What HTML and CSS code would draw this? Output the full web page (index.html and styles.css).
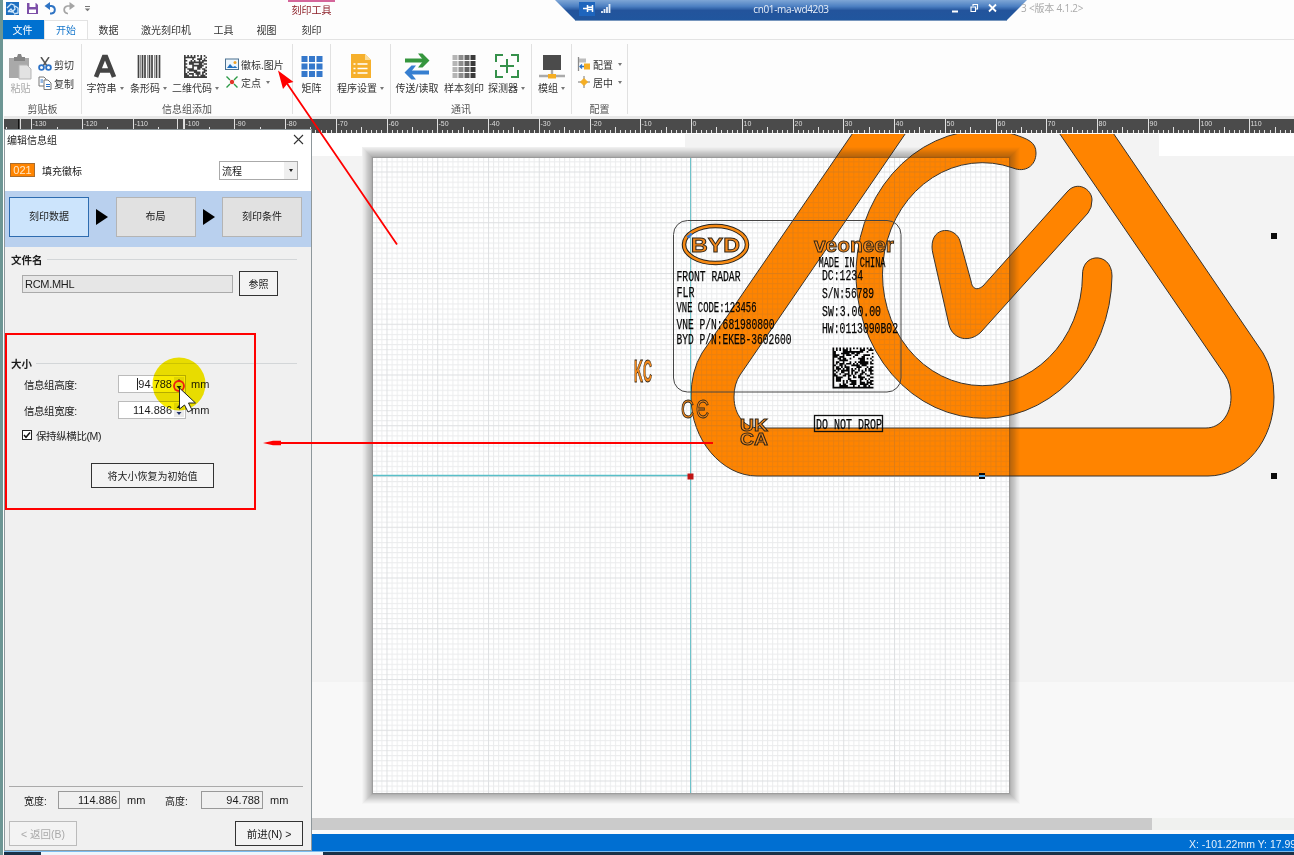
FILE: index.html
```html
<!DOCTYPE html>
<html lang="zh-CN">
<head>
<meta charset="utf-8">
<title>刻印工具</title>
<link rel="stylesheet" href="styles.css">
</head>
<body>
<div class="app">
  <header class="titlebar">
    <div class="quick">
      <svg width="95" height="18" viewBox="0 0 95 18">
        <rect x="6" y="2" width="13" height="13" fill="#1e6fc0"/>
        <path d="M7 8l4-4 3 1 1 4-3 3-4-1M8 12l3-3 3 4M15 6l3 2v5l-4 1" fill="none" stroke="#cfe6fa" stroke-width="1.3"/>
        <path d="M27 3h9l2 2v9H27z" fill="#7d4fa8"/><path d="M29.500 3h6v4h-6zM29 9.500h7V13h-7z" fill="#fff"/>
        <path d="M46 6h5.500a4 3.800 0 0 1 0 7.500H50" fill="none" stroke="#2f74c4" stroke-width="1.900"/><path d="M50 2v8l-5.500-4z" fill="#2f74c4"/>
        <path d="M73 6h-5.500a4 3.800 0 0 0 0 7.500H68" fill="none" stroke="#a5a5a5" stroke-width="1.700"/><path d="M69.500 2v8l5.500-4z" fill="#a5a5a5"/>
        <path d="M85 6.500h5" stroke="#777"/><path d="M84.800 8.500h5.400l-2.700 2.800z" fill="#777"/>
      </svg>
    </div>
    <div class="context-tab">刻印工具</div>
    <div class="remote">
      <svg class="remote-shape" width="472" height="22" viewBox="0 0 472 22">
        <defs><linearGradient id="rb" x2="0" y2="1"><stop offset="0" stop-color="#7ea6d6"/><stop offset=".3" stop-color="#4d80c2"/><stop offset=".5" stop-color="#23549c"/><stop offset="1" stop-color="#20569e"/></linearGradient></defs>
        <path d="M0 0h472l-21 21H21z" fill="url(#rb)"/><path d="M20 20.500h432" stroke="#7796bd"/>
        <rect x="24" y="2" width="16" height="14" fill="#1e65bd"/>
        <path d="M28 8.500h4M32.500 5v7M37.500 5v7M33 7.200h4.500M33 9.500h4.500" stroke="#fff" stroke-width="1.500"/>
        <path d="M47 13v-2M49.500 13v-4M52 13V7M54.500 13V4" stroke="#e7effa" stroke-width="1.800"/>
        <path d="M397 11.500h6M434 4.500l7 7m0-7l-7 7" stroke="#fff" stroke-width="1.800"/>
        <path d="M416 7h4.500v4.500H416zM418 6V4.500h4.500V9H421" fill="none" stroke="#fff" stroke-width="1.100"/>
      </svg>
      <span class="remote-name">cn01-ma-wd4203</span>
    </div>
    <span class="version">3 &lt;版本 4.1.2&gt;</span>
  </header>

  <nav class="tabs">
    <span class="tab tab-file">文件</span><span class="tab tab-active">开始</span><span class="tab">数据</span><span class="tab tab-wide">激光刻印机</span><span class="tab">工具</span><span class="tab">视图</span><span class="tab tab-last">刻印</span>
  </nav>

  <div class="ribbon">
    <section class="group g-clip">
      <div class="tools">
        <div class="big disabled">
          <svg width="26" height="28" viewBox="0 0 26 28"><path d="M1 5h20v20H1z" fill="#a9a9a9"/><path d="M6 8V4h3l1-3h3l1 3h3v4z" fill="#858585"/><path d="M11 12h8l4 4v10H11z" fill="#e2e2e2" stroke="#b5b5b5"/></svg>
          <span class="cap">粘贴</span>
        </div>
        <div class="small-col">
          <div class="small"><svg width="14" height="14" viewBox="0 0 14 14"><path d="M3 0l6 9M11 0L5 9" stroke="#555" stroke-width="1.500"/><circle cx="3.500" cy="10.500" r="2.400" fill="none" stroke="#2c72c7" stroke-width="1.800"/><circle cx="10.500" cy="10.500" r="2.400" fill="none" stroke="#2c72c7" stroke-width="1.800"/></svg>剪切</div>
          <div class="small"><svg width="14" height="14" viewBox="0 0 14 14"><path d="M1 1h5l2 2v7H1z" fill="#fff" stroke="#777"/><path d="M6 4h4l3 3v6.500H6z" fill="#fff" stroke="#777"/><path d="M2.500 4H5M2.500 6H5M8 8.500h4M8 10.500h4" stroke="#2c72c7"/></svg>复制</div>
        </div>
      </div>
      <div class="group-name">剪贴板</div>
    </section>
    <section class="group g-add">
      <div class="tools">
        <div class="big b-char"><svg width="24" height="28" viewBox="0 0 24 28"><path d="M3 24L11 4h2l8 20M6.500 17.500h11" fill="none" stroke="#444" stroke-width="4.600"/></svg><span class="cap">字符串<i class="drop"></i></span></div>
        <div class="big b-bar"><svg width="24" height="28" viewBox="0 0 24 28"><path d="M1.500 2v23M5.500 2v23M8 2v23M12.500 2v23M15 2v23M19.500 2v23M22.500 2v23" stroke="#444" stroke-width="1.700"/><path d="M3.500 2v23M10.500 2v23M17.500 2v23" stroke="#777" stroke-width=".8"/></svg><span class="cap">条形码<i class="drop"></i></span></div>
        <div class="big b-qr"><svg width="24" height="28" viewBox="0 0 24 28"><path id="ribbonCode" fill="#3c3c3c"/></svg><span class="cap">二维代码<i class="drop"></i></span></div>
        <div class="small-col">
          <div class="small"><svg width="14" height="14" viewBox="0 0 14 14"><rect x=".5" y="2" width="13" height="10.500" fill="#eef6fc" stroke="#4b7090"/><path d="M2 11l3-4 3 3 2-1 2.500 2z" fill="#1e70c2"/><circle cx="10" cy="5.500" r="1.500" fill="#f0a224"/></svg>徽标.图片</div>
          <div class="small"><svg width="14" height="14" viewBox="0 0 14 14"><path d="M1.500 1.500l3.500 3.500M12.500 1.500L9 5M1.500 12.500L5 9M12.500 12.500L9 9" stroke="#2c9a47" stroke-width="1.400"/><circle cx="7" cy="7" r="2.200" fill="#e23428"/></svg>定点<i class="drop"></i></div>
        </div>
      </div>
      <div class="group-name">信息组添加</div>
    </section>
    <section class="group g-matrix">
      <div class="tools"><div class="big"><svg width="24" height="28" viewBox="0 0 24 28"><path d="M1.500 3h6v6h-6zm7.500 0h6v6h-6zm7.500 0h6v6h-6zM1.500 10.500h6v6h-6zm7.500 0h6v6h-6zm7.500 0h6v6h-6zM1.500 18h6v6h-6zm7.500 0h6v6h-6zm7.500 0h6v6h-6z" fill="#3578cb"/></svg><span class="cap">矩阵</span></div></div>
    </section>
    <section class="group g-prog">
      <div class="tools"><div class="big"><svg width="22" height="28" viewBox="0 0 22 28"><path d="M1 1h14l6 6v18H1z" fill="#f6b02c"/><path d="M15 1l6 6h-6z" fill="#fbdc98"/><path d="M7.500 11h10M7.500 15.500h10M7.500 20h10M3.500 11h2M3.500 15.500h2M3.500 20h2" stroke="#fff" stroke-width="1.700"/></svg><span class="cap">程序设置<i class="drop"></i></span></div></div>
    </section>
    <section class="group g-comm">
      <div class="tools">
        <div class="big b-send"><svg width="26" height="28" viewBox="0 0 26 28"><path d="M1 7.500h19" stroke="#36963e" stroke-width="4"/><path d="M14 .5h4.500l7 7-7 7H14l5.500-7z" fill="#36963e"/><path d="M6 19.500h19" stroke="#377fd0" stroke-width="4"/><path d="M12 12.500H7.500l-7 7 7 7H12l-5.500-7z" fill="#377fd0"/></svg><span class="cap">传送/读取</span></div>
        <div class="big b-sample"><svg width="24" height="28" viewBox="0 0 24 28"><path d="M3 2v23" stroke="#b5b5b5" stroke-width="5" stroke-dasharray="5 1"/><path d="M9 2v23" stroke="#8d8d8d" stroke-width="5" stroke-dasharray="5 1"/><path d="M15 2v23" stroke="#646464" stroke-width="5" stroke-dasharray="5 1"/><path d="M21 2v23" stroke="#3a3a3a" stroke-width="5" stroke-dasharray="5 1"/></svg><span class="cap">样本刻印</span></div>
        <div class="big b-probe"><svg width="24" height="28" viewBox="0 0 24 28"><path d="M1 9V2h7M16 2h7v7M23 17v7h-7M8 24H1v-7M12 6v14M5 13h14" fill="none" stroke="#36914b" stroke-width="2"/></svg><span class="cap">探测器<i class="drop"></i></span></div>
      </div>
      <div class="group-name">通讯</div>
    </section>
    <section class="group g-module">
      <div class="tools"><div class="big"><svg width="28" height="28" viewBox="0 0 28 28"><rect x="5" y="2" width="18" height="15" fill="#4b4b4b"/><path d="M14 17v5M1 23h26" stroke="#aaa" stroke-width="2.400"/><rect x="10" y="21" width="8" height="4.500" fill="#f5ae23"/></svg><span class="cap">模组<i class="drop"></i></span></div></div>
    </section>
    <section class="group g-config">
      <div class="tools"><div class="small-col">
        <div class="small"><svg width="14" height="14" viewBox="0 0 14 14"><path d="M1.500 0v14" stroke="#8b8b8b" stroke-width="1.300"/><rect x="2" y="1.500" width="7" height="4" fill="#bcbcbc"/><path d="M3 9.500h4M5 7.500l-2 2 2 2" fill="none" stroke="#2c72c7" stroke-width="1.300"/><rect x="7" y="6.500" width="6" height="6" fill="#f5ae23"/></svg>配置<i class="drop"></i></div>
        <div class="small"><svg width="14" height="14" viewBox="0 0 14 14"><path d="M7 1v12M1 7h12" stroke="#777"/><path d="M7 3.500l3.500 3.500L7 10.500 3.500 7z" fill="#f5ae23" stroke="#f5ae23"/></svg>居中<i class="drop"></i></div>
      </div></div>
      <div class="group-name">配置</div>
    </section>
  </div>

  <svg class="ruler" width="1290" height="15" viewBox="4 119 1290 15">
    <rect x="4" y="119" width="1290" height="14" fill="#4b4b4b"/>
    <path id="ticks" stroke="#e2e2e2"/>
    <g id="rulerLabels" class="ruler-labels"></g>
    <path d="M18.500 119v14" stroke="#111"/><path d="M20.500 119v14M177.500 119v14M183.500 119v14" stroke="#ddd"/>
  </svg>

  <main class="work">
    <svg class="canvas" width="982" height="684" viewBox="312 134 982 684">
      <defs>
        <pattern id="mm" x="691" y="476" width="5.075" height="5.075" patternUnits="userSpaceOnUse"><path d="M0 .5h5.075M.5 0v5.075" stroke="#5c6270" stroke-opacity=".12"/></pattern>
        <pattern id="cm" x="691" y="476" width="50.75" height="50.75" patternUnits="userSpaceOnUse"><path d="M0 .5h50.750M.5 0v50.750" stroke="#5c6270" stroke-opacity=".09"/></pattern>
      </defs>
      <rect x="312" y="134" width="982" height="684" fill="#f3f3f3"/>
      <path d="M312 134h373v13H362v9h-50zM1159 134h135v22h-135z" fill="#fff"/>
      <rect x="312" y="682" width="982" height="136" fill="#f8f8f8"/>
      <rect x="373" y="158" width="636" height="635" fill="#fff"/>
      <g fill="#ff8400" stroke="#38332d" stroke-width="1" fill-rule="evenodd">
        <path d="M859 124L702 353Q691 371 691 397C691 440 722 476 757 476H1208C1245 476 1274 440 1274 397Q1274 371 1263 353L1107 124H1053L1225 375Q1231 384 1231 397C1231 415 1220 428 1206 428H759C745 428 734 415 734 397Q734 384 740 375L912 124Z"/>
        <path d="M1013 134C1028 139 1036 142 1036 153C1036 166 1025 173 1013 168A100 111.500 0 1 0 1082.500 275C1082 252 1112 252 1112 276A128 144 0 1 1 1013 134Z"/>
        <path d="M932 247C932 225 956 227 960 241L971 281C972 289 977 291 983 286L1067 192C1077 180 1092 189 1092 200Q1092 208 1088 213L981 332C970 343 953 340 949 325L933 254Q932 250 932 247Z"/>
      </g>
      <rect x="373" y="158" width="636" height="635" fill="url(#mm)"/>
      <rect x="373" y="158" width="636" height="635" fill="url(#cm)"/>
      <g fill="none" stroke="#202020" stroke-width="1">
        <rect x="372.500" y="157.500" width="637" height="636" stroke-opacity=".42"/>
        <rect x="371.500" y="156.500" width="639" height="638" stroke-opacity=".33"/>
        <rect x="370.500" y="155.500" width="641" height="640" stroke-opacity=".28"/>
        <rect x="369.500" y="154.500" width="643" height="642" stroke-opacity=".25"/>
        <rect x="368.500" y="153.500" width="645" height="644" stroke-opacity=".22"/>
        <rect x="367.500" y="152.500" width="647" height="646" stroke-opacity=".19"/>
        <rect x="366.500" y="151.500" width="649" height="648" stroke-opacity=".15"/>
        <rect x="365.500" y="150.500" width="651" height="650" stroke-opacity=".11"/>
        <rect x="364.500" y="149.500" width="653" height="652" stroke-opacity=".08"/>
        <rect x="363.500" y="148.500" width="655" height="654" stroke-opacity=".05"/>
        <rect x="362.500" y="147.500" width="657" height="656" stroke-opacity=".02"/>
      </g>
      <path d="M690.500 158v635" stroke="#6ec3ca"/>
      <path d="M373 475.500h318" stroke="#58bfc8" stroke-width="1.400"/>
      <rect x="673.500" y="220.500" width="227.500" height="171.500" rx="14" fill="none" stroke="#444"/>
      <ellipse cx="715.500" cy="244.500" rx="31.500" ry="18.500" fill="none" stroke="#29241e" stroke-width="4.500"/>
      <ellipse cx="715.500" cy="244.500" rx="31.500" ry="18.500" fill="none" stroke="#f78a13" stroke-width="2.500"/>
      <path d="M687 237l5-3M689 238l2-5" stroke="#3479d5" stroke-width="1.500"/>
      <g class="mark-logo">
        <text x="691" y="251.500" font-size="20" font-weight="bold" textLength="49" lengthAdjust="spacingAndGlyphs">BYD</text>
        <text x="814" y="252" font-size="20" font-weight="bold" stroke-width=".9" textLength="80" lengthAdjust="spacingAndGlyphs">veoneer</text>
        <text x="634" y="382" font-size="31" font-weight="bold" textLength="18" lengthAdjust="spacingAndGlyphs">KC</text>
        <text x="681" y="418" font-size="25" textLength="13" lengthAdjust="spacingAndGlyphs">C</text>
        <text x="696" y="418" font-size="25" textLength="13" lengthAdjust="spacingAndGlyphs">Є</text>
        <text x="740" y="430.500" font-size="16" font-weight="bold" textLength="28" lengthAdjust="spacingAndGlyphs">UK</text>
        <text x="740" y="445" font-size="16" font-weight="bold" textLength="28" lengthAdjust="spacingAndGlyphs">CA</text>
      </g>
      <g class="mark-text">
        <text x="676.500" y="280.500" textLength="64" lengthAdjust="spacingAndGlyphs">FRONT RADAR</text>
        <text x="676.500" y="296.500" textLength="18" lengthAdjust="spacingAndGlyphs">FLR</text>
        <text x="676.500" y="311.500" textLength="80" lengthAdjust="spacingAndGlyphs">VNE CODE:123456</text>
        <text x="676.500" y="328.500" textLength="98" lengthAdjust="spacingAndGlyphs">VNE P/N:681980800</text>
        <text x="676.500" y="344" textLength="115" lengthAdjust="spacingAndGlyphs">BYD P/N:EKEB-3602600</text>
        <text x="818.500" y="266.500" textLength="67" lengthAdjust="spacingAndGlyphs">MADE IN CHINA</text>
        <text x="822" y="279.500" textLength="41" lengthAdjust="spacingAndGlyphs">DC:1234</text>
        <text x="822" y="298" textLength="52" lengthAdjust="spacingAndGlyphs">S/N:56789</text>
        <text x="822" y="315.500" textLength="59" lengthAdjust="spacingAndGlyphs">SW:3.00.00</text>
        <text x="822" y="332.500" textLength="76" lengthAdjust="spacingAndGlyphs">HW:0113090B02</text>
        <text x="816" y="428.500" textLength="66" lengthAdjust="spacingAndGlyphs">DO NOT DROP</text>
      </g>
      <path id="labelCode" fill="#050505"/>
      <rect x="814.500" y="415.500" width="68" height="16" fill="none" stroke="#111" stroke-width="1.300"/>
      <path d="M1271 233h6v6h-6zM1271 473h6v6h-6zM979 473h6v6h-6z" fill="#0a0a0a"/>
      <path d="M979 475h6v2h-6z" fill="#51a8e7"/>
      <path d="M687.500 473.500h6v6h-6z" fill="#c01414"/>
    </svg>
  </main>
  <div class="scroll"><div class="thumb"></div></div>
  <footer class="status">X: -101.22mm Y: 17.99mm</footer>
  <div class="taskbar"><div class="task-light"></div></div>

  <aside class="panel">
    <div class="panel-title"><span>编辑信息组</span><svg width="11" height="11" viewBox="0 0 11 11"><path d="M1 1l9 9M10 1l-9 9" stroke="#333" stroke-width="1.100"/></svg></div>
    <div class="panel-id"><span class="badge">021</span><span>填充徽标</span><span class="select"><span>流程</span><i class="select-arrow"></i></span></div>
    <div class="steps"><span class="step step-on">刻印数据</span><i class="next"></i><span class="step">布局</span><i class="next"></i><span class="step">刻印条件</span></div>
    <div class="heading">文件名</div>
    <div class="file-row"><span class="file-name">RCM.MHL</span><button class="btn btn-browse">参照</button></div>
    <div class="heading heading-size">大小</div>
    <div class="field"><label>信息组高度:</label><span class="num"><span class="caret">94.788</span><svg width="10" height="14" viewBox="0 0 10 14"><rect width="10" height="14" fill="#e9e9e9"/><path d="M5 2l2.500 3h-5zM5 12l2.500-3h-5z" fill="#20306a"/></svg></span><span>mm</span></div>
    <div class="field"><label>信息组宽度:</label><span class="num">114.886<svg width="10" height="14" viewBox="0 0 10 14"><rect width="10" height="14" fill="#e9e9e9"/><path d="M5 2l2.500 3h-5zM5 12l2.500-3h-5z" fill="#20306a"/></svg></span><span>mm</span></div>
    <div class="check"><svg width="10" height="10" viewBox="0 0 10 10"><rect x=".5" y=".5" width="9" height="9" fill="#fff" stroke="#222"/><path d="M2 5l2 2.300L8 2.500" fill="none" stroke="#111" stroke-width="1.500"/></svg>保持纵横比(M)</div>
    <button class="btn btn-reset">将大小恢复为初始值</button>
    <div class="panel-foot">
      <div class="totals"><span class="t-label">宽度:</span><span class="total">114.886</span><span class="t-unit">mm</span><span class="t-label">高度:</span><span class="total">94.788</span><span class="t-unit">mm</span></div>
      <div class="nav-row"><button class="btn btn-nav btn-off">&lt; 返回(B)</button><button class="btn btn-nav">前进(N) &gt;</button></div>
    </div>
  </aside>

  <svg class="notes" width="1294" height="855" viewBox="0 0 1294 855">
    <circle class="halo" cx="179" cy="384" r="26.500" fill="#f7ea00"/>
    <circle cx="179" cy="386" r="5" fill="none" stroke="#f01c10" stroke-width="1.800"/>
    <path d="M179.500 388v21l5-4 3.500 7 4-2-3.500-7h7z" fill="#fff" stroke="#222"/>
    <rect x="6" y="334" width="249" height="175" fill="none" stroke="#f00" stroke-width="2"/>
    <path d="M713 443H278M397 244.500L286 82" stroke="#f00" stroke-width="1.800"/>
    <path d="M263 443l10-2.300h8v4.600h-8zM278 70.500l15.500 11.500-6 1.500-4.500 5.500z" fill="#f00"/>
  </svg>
</div>
<script src="app.js"></script>
</body>
</html>
```

FILE: styles.css
```css
* { box-sizing: border-box; }
body { margin: 0; overflow: hidden; background: #fdfdfd; font-family: "Liberation Sans", "Noto Sans CJK SC", sans-serif; font-size: 10px; color: #333; }
svg { display: block; flex: none; }
.app { position: relative; width: 1294px; height: 855px; overflow: hidden; display: flex; flex-direction: column; border-left: 3px solid #6d9694; padding-left: 1px; }

.titlebar { height: 20px; flex: none; display: flex; align-items: flex-start; margin-left: -4px; }
.quick { width: 288px; }
.context-tab { width: 47px; height: 20px; border-top: 2px solid #d4669a; text-align: center; line-height: 17px; color: #8c1f28; }
.remote { position: relative; margin-left: 220px; width: 472px; height: 22px; flex: none; display: flex; justify-content: center; }
.remote-shape { position: absolute; left: 0; top: 0; }
.remote-name { position: relative; color: #e9f0f9; font: 10px/18px "Open Sans", sans-serif; letter-spacing: -.35px; }
.version { margin-left: -6px; position: relative; color: #aaa; line-height: 17px; font-family: "Open Sans", "Noto Sans CJK SC", sans-serif; white-space: nowrap; letter-spacing: -.2px; }

.tabs { height: 20px; flex: none; display: flex; border-bottom: 1px solid #e3e3e3; margin-left: -3px; }
.tab { width: 43px; text-align: center; line-height: 21px; flex: none; padding-right: 2px; }
.tab-file { background: #0071d0; color: #fff; padding-right: 0; }
.tab-active { width: 44px; background: #fff; color: #1878cc; border: 1px solid #e3e3e3; border-bottom: 0; line-height: 19px; padding-right: 0; }
.tab-wide { width: 72px; }
.tab-last { width: 47px; }

.ribbon { height: 79px; flex: none; display: flex; padding-top: 4px; border-bottom: 3px solid #e8e8e8; background: #fdfdfd; }
.group { height: 70px; border-right: 1px solid #e1e1e1; display: flex; flex-direction: column; flex: none; }
.tools { height: 57px; flex: none; padding-top: 9px; display: flex; }
.group-name { text-align: center; line-height: 15px; padding-top: 1px; color: #555; }
.big { display: flex; flex-direction: column; align-items: center; width: 100%; }
.cap { display: flex; align-items: center; line-height: 15px; white-space: nowrap; }
.drop { border: 2.5px solid transparent; border-top: 3px solid #777; border-bottom: 0; margin-left: 3px; }
.small-col { display: flex; flex-direction: column; gap: 1px; padding-top: 2px; }
.small { display: flex; align-items: center; height: 18px; gap: 2px; white-space: nowrap; }
.disabled { color: #aaa; }
.g-clip { width: 78px; }
.g-clip .big { width: 33px; }
.g-clip .small-col { padding-left: 1px; }
.g-add { width: 211px; }
.b-char { width: 46px; }
.b-bar { width: 41px; }
.b-qr { width: 53px; }
.g-add .small-col { padding-left: 3px; gap: 0; }
.g-matrix { width: 38px; }
.g-prog { width: 60px; }
.g-comm { width: 141px; }
.b-send { width: 52px; }
.b-sample { width: 42px; }
.b-probe { width: 43px; }
.g-module { width: 40px; }
.g-config { width: 56px; }
.g-config .small-col { padding-left: 5px; gap: 0; }

.ruler { flex: none; }
.ruler-labels { fill: #ddd; font: 7px "Liberation Sans", sans-serif; }
.work { flex: none; padding-left: 308px; }
.mark-text { font: 14.5px "Liberation Mono", monospace; fill: #050505; stroke: #050505; stroke-width: .25; }
.mark-logo { font-family: "Liberation Sans", sans-serif; fill: #f58a1c; stroke: #2e2519; stroke-width: .9; }
.scroll { height: 16px; flex: none; background: #f0f1ef; border-bottom: 4px solid #fbfbfb; padding-left: 308px; }
.thumb { width: 840px; height: 12px; background: #cbcbcb; }
.status { height: 18px; flex: none; background: #006fd2; color: #e4f0fb; padding-left: 1185px; line-height: 20px; font-size: 10.5px; white-space: nowrap; overflow: hidden; border-bottom: 1px solid #7cbcf0; }
.taskbar { flex: 1; background: #1a3147; padding-left: 37px; }
.task-light { width: 282px; height: 5px; background: #eef5fb; }

.panel { position: absolute; left: 1px; top: 129px; width: 308px; height: 722px; background: #f0f0f0; border: 1px solid #8e979b; color: #1c1c1c; display: flex; flex-direction: column; }
.panel-title { height: 19px; background: #fff; display: flex; justify-content: space-between; align-items: center; padding: 0 7px 0 2px; flex: none; }
.panel-id { height: 42px; background: #fff; display: flex; align-items: center; padding: 0 13px 0 5px; gap: 7px; flex: none; }
.badge { width: 25px; height: 14px; background: #ff8400; border: 1px solid #a96d2d; color: #ffe9c9; line-height: 13px; text-align: center; font-size: 11px; }
.select { margin-left: auto; width: 79px; height: 19px; background: #fff; border: 1px solid #aaa; display: flex; justify-content: space-between; align-items: center; padding-left: 2px; }
.select-arrow { width: 13px; height: 17px; background: #efefef; display: flex; align-items: center; justify-content: center; }
.select-arrow::before { content: ""; border: 2.5px solid transparent; border-top: 3px solid #222; border-bottom: 0; }
.steps { height: 56px; flex: none; background: #b9d0ee; display: flex; align-items: center; padding: 0 9px 4px 4px; justify-content: space-between; }
.step { width: 80px; height: 40px; background: #e1e1e1; border: 1px solid #b4b4b4; line-height: 38px; text-align: center; }
.step-on { background: #cce4fc; border-color: #2e6cb0; }
.next { border: 8px solid transparent; border-left: 12px solid #000; border-right: 0; }
.heading { height: 24px; flex: none; display: flex; align-items: center; gap: 4px; font-weight: bold; font-size: 10.5px; padding: 0 14px 0 6px; }
.heading::after { content: ""; flex: 1; height: 1px; background: #d3d6d8; }
.file-row { display: flex; align-items: center; gap: 6px; padding-left: 17px; flex: none; height: 25px; }
.file-name { width: 211px; height: 18px; border: 1px solid #aaa; background: #e6e6e6; font-size: 11px; line-height: 17px; padding-left: 2px; letter-spacing: -.3px; }
.btn { font: inherit; color: inherit; border: 1px solid #333; background: #f3f3f3; padding: 0; height: 25px; white-space: nowrap; }
.btn-browse { width: 39px; }
.heading-size { margin-top: 55px; }
.field { height: 18px; margin-bottom: 8px; display: flex; align-items: center; padding-left: 19px; flex: none; font-size: 11px; }
.field label { width: 94px; font-size: 10.5px; letter-spacing: -.45px; }
.num { width: 68px; height: 18px; background: #fff; border: 1px solid #bbb; display: flex; justify-content: flex-end; align-items: center; gap: 2px; padding-right: 1px; margin-right: 5px; }
.caret { border-left: 1px solid #222; }
.check { display: flex; align-items: center; gap: 4px; height: 16px; padding-left: 17px; flex: none; font-size: 10.5px; letter-spacing: -.4px; }
.btn-reset { width: 123px; margin: 20px 0 0 86px; flex: none; }
.panel-foot { margin: auto 8px 4px 4px; border-top: 1px solid #aaa; padding-top: 4px; }
.totals { display: flex; align-items: center; height: 18px; padding-left: 15px; }
.t-label { width: 34px; flex: none; }
.total { width: 62px; flex: none; height: 18px; border: 1px solid #999; text-align: right; line-height: 17px; padding-right: 2px; font-size: 11px; }
.t-unit { width: 45px; flex: none; padding-left: 7px; font-size: 11px; }
.t-unit + .t-label { width: 36px; }
.nav-row { display: flex; justify-content: space-between; margin-top: 12px; }
.btn-nav { width: 68px; font-size: 10.5px; }
.btn-off { color: #aaa; border-color: #bbb; }

.notes { position: absolute; left: -3px; top: 0; pointer-events: none; }
.halo { mix-blend-mode: multiply; }
```

FILE: app.js
```js
const ORIGIN = 691, MM = 5.075;

// Ruler: a tick per millimetre, longer ones at 5 mm, full height at 10 mm
let ticks = '';
const labels = document.getElementById('rulerLabels');
for (let mm = -135; mm <= 118; mm++) {
  const x = Math.round(ORIGIN + mm * MM) + .5;
  const top = mm % 10 === 0 ? 119 : mm % 5 === 0 ? 127 : 130;
  ticks += `M${x} ${top}V133`;
  if (mm % 10 === 0) {
    const t = document.createElementNS('http://www.w3.org/2000/svg', 'text');
    t.setAttribute('x', x + 1);
    t.setAttribute('y', 126);
    t.textContent = mm;
    labels.appendChild(t);
  }
}
document.getElementById('ticks').setAttribute('d', ticks);

// Data matrix: solid left and bottom edges, alternating top and right edges
function matrix(x0, y0, n, size, seed) {
  let d = '', s = seed;
  const m = size / n;
  for (let r = 0; r < n; r++) for (let c = 0; c < n; c++) {
    s = (s * 1103515245 + 12345) % 2147483648;
    let on = s / 2147483648 > .48;
    if (r === 0) on = c % 2 === 0;
    if (c === n - 1) on = r % 2 === 1;
    if (c === 0 || r === n - 1) on = true;
    if (on) d += `M${x0 + c * m} ${y0 + r * m}h${m}v${m}h${-m}z`;
  }
  return d;
}
document.getElementById('labelCode').setAttribute('d', matrix(832.5, 347.5, 24, 41, 77));
document.getElementById('ribbonCode').setAttribute('d', matrix(0, 2, 14, 23, 9));
```
